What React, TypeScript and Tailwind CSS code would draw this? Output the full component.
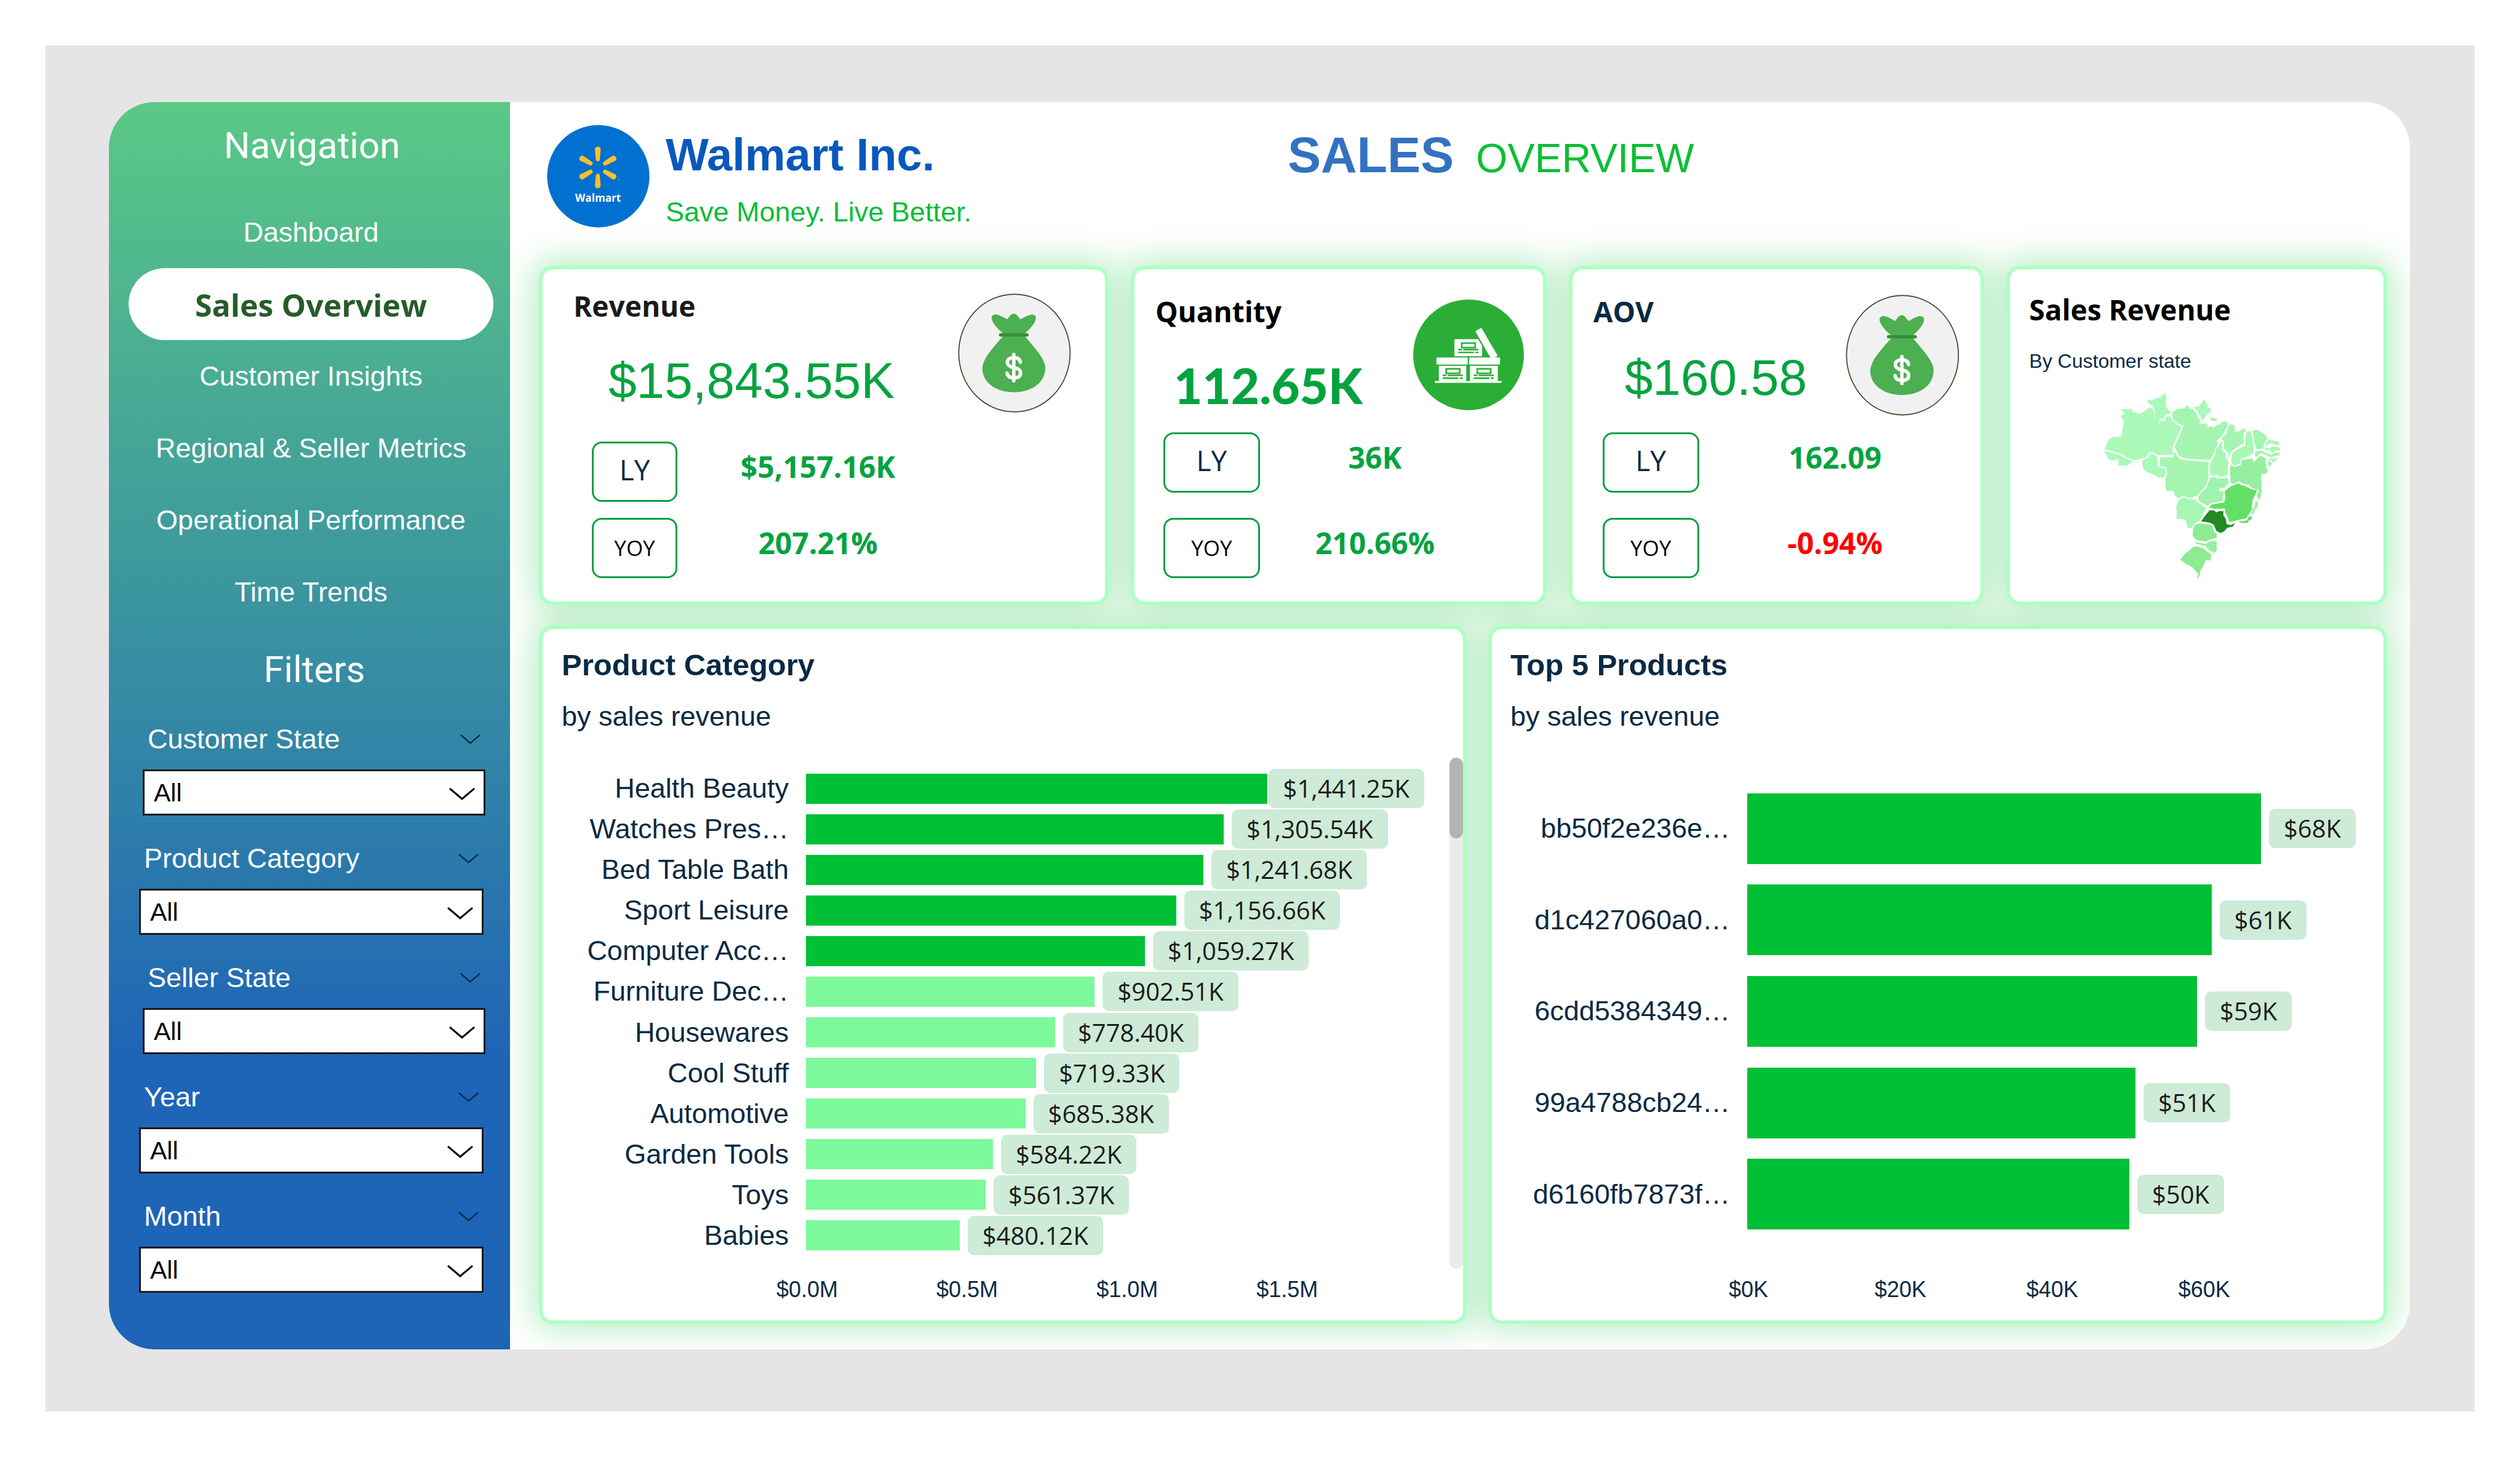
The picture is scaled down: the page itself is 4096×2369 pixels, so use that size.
import type { ReactNode } from "react";

const navItems = [
  "Dashboard",
  "Sales Overview",
  "Customer Insights",
  "Regional & Seller Metrics",
  "Operational Performance",
  "Time Trends",
];

const filters = [
  { id: "customer-state", label: "Customer State", pad: "pl-[55px] pr-10" },
  { id: "product-category", label: "Product Category", pad: "pl-[49px] pr-[43px]" },
  { id: "seller-state", label: "Seller State", pad: "pl-[55px] pr-10" },
  { id: "year", label: "Year", pad: "pl-[49px] pr-[43px]" },
  { id: "month", label: "Month", pad: "pl-[49px] pr-[43px]" },
];

type Bar = { name: string; value: number; text: string; tone: string };

const DARK = "bg-[#00c036]";
const LIGHT = "bg-[#7df99c]";

const categories: Bar[] = [
  { name: "Health Beauty", value: 1441.25, text: "$1,441.25K", tone: DARK },
  { name: "Watches Pres…", value: 1305.54, text: "$1,305.54K", tone: DARK },
  { name: "Bed Table Bath", value: 1241.68, text: "$1,241.68K", tone: DARK },
  { name: "Sport Leisure", value: 1156.66, text: "$1,156.66K", tone: DARK },
  { name: "Computer Acc…", value: 1059.27, text: "$1,059.27K", tone: DARK },
  { name: "Furniture Dec…", value: 902.51, text: "$902.51K", tone: LIGHT },
  { name: "Housewares", value: 778.4, text: "$778.40K", tone: LIGHT },
  { name: "Cool Stuff", value: 719.33, text: "$719.33K", tone: LIGHT },
  { name: "Automotive", value: 685.38, text: "$685.38K", tone: LIGHT },
  { name: "Garden Tools", value: 584.22, text: "$584.22K", tone: LIGHT },
  { name: "Toys", value: 561.37, text: "$561.37K", tone: LIGHT },
  { name: "Babies", value: 480.12, text: "$480.12K", tone: LIGHT },
];

const products: Bar[] = [
  { name: "bb50f2e236e…", value: 67.5, text: "$68K", tone: DARK },
  { name: "d1c427060a0…", value: 61, text: "$61K", tone: DARK },
  { name: "6cdd5384349…", value: 59.1, text: "$59K", tone: DARK },
  { name: "99a4788cb24…", value: 51, text: "$51K", tone: DARK },
  { name: "d6160fb7873f…", value: 50.2, text: "$50K", tone: DARK },
];

const states: { id: string; fill: string; points: string }[] = [
  { id: "RR", fill: "#aaf9b9", points: "373,52 376,62 382,72 378,98 384,126 402,146 400,156 380,156 372,172 366,184 354,176 345,188 342,203 322,190 322,140 318,120 300,106 288,96 290,82 305,90 325,80 350,74" },
  { id: "AM", fill: "#aaf9b9", points: "160,132 204,132 208,126 214,145 235,150 240,155 258,152 285,132 300,122 314,130 320,150 320,185 338,202 348,200 355,184 364,192 372,190 380,168 400,166 410,185 430,205 456,222 412,320 414,358 334,360 318,346 296,346 280,370 240,382 220,386 146,350 74,328 86,310 90,290 105,276 120,270 158,268 166,225 170,192 156,165 176,152 160,138" },
  { id: "AC", fill: "#aaf9b9", points: "70,338 142,356 218,393 200,400 188,412 144,412 144,380 126,382 110,388 90,374 88,362" },
  { id: "RO", fill: "#aaf9b9", points: "264,385 290,372 302,354 316,354 338,372 340,418 374,424 378,450 368,470 340,470 310,452 290,446 268,430 262,410" },
  { id: "PA", fill: "#a5f5b1", points: "410,146 440,130 474,126 480,114 492,116 494,128 512,132 528,150 545,185 552,195 542,206 558,206 580,200 584,214 590,222 600,216 612,218 614,230 622,216 640,208 650,205 656,192 668,196 676,190 684,198 686,212 672,240 652,270 628,290 640,298 622,330 620,350 598,384 470,376 442,360 428,330 422,318 468,214 440,204 414,184" },
  { id: "AP", fill: "#aaf9b9", points: "568,82 576,92 584,110 586,122 604,130 596,150 580,162 560,188 545,160 534,138 514,122 544,118" },
  { id: "MJ", fill: "#a5f5b1", points: "596,174 636,178 622,192 604,190" },
  { id: "MA", fill: "#a5f5b1", points: "692,210 700,206 706,212 718,208 722,236 712,242 740,242 764,228 776,234 764,250 766,300 738,318 710,336 696,352 694,380 686,345 668,330 666,290 654,278 680,250" },
  { id: "PI", fill: "#a8f7b5", points: "784,242 798,240 806,270 814,320 816,345 796,362 752,376 746,400 722,412 704,400 704,375 710,345 740,328 772,312 774,260" },
  { id: "CE", fill: "#a5f5b1", points: "808,238 830,234 860,250 884,275 864,305 860,328 826,330 816,290" },
  { id: "RN", fill: "#a8f7b5", points: "888,284 910,288 936,290 942,312 925,308 900,302 885,304 875,318 872,302" },
  { id: "PB", fill: "#a8f7b5", points: "872,322 890,326 905,318 944,322 944,336 925,336 905,350 895,334 870,336" },
  { id: "PE", fill: "#a5f5b1", points: "826,340 850,336 870,346 900,358 915,350 944,346 940,362 920,364 900,370 880,362 850,350 824,372 818,354" },
  { id: "AL", fill: "#a8f7b5", points: "886,372 905,378 935,372 914,398 900,386" },
  { id: "SE", fill: "#a8f7b5", points: "886,384 908,402 890,420 884,400" },
  { id: "BA", fill: "#95ef9f", points: "700,408 722,418 750,408 756,384 806,376 816,392 846,362 876,378 870,398 878,408 874,418 886,434 874,452 854,454 850,482 852,500 854,540 846,576 836,580 830,556 840,534 806,522 790,508 760,500 740,488 716,502 700,498 696,440" },
  { id: "TO", fill: "#a8f7b5", points: "650,292 660,296 658,335 676,350 674,366 690,392 684,430 686,458 650,468 628,454 620,464 600,458 596,430 600,400 622,360 628,325 640,315" },
  { id: "MT", fill: "#a5f5b1", points: "350,370 414,370 422,340 440,372 462,384 592,394 588,440 592,470 578,510 552,540 530,566 520,562 510,572 486,570 466,560 440,574 422,558 420,538 380,536 376,478 386,450 382,420 350,414" },
  { id: "GO", fill: "#9ff3ac", points: "598,472 622,468 632,476 686,472 690,500 672,520 645,522 642,538 666,540 662,586 600,598 586,610 548,592 538,570 552,548 578,524" },
  { id: "MG", fill: "#63df68", points: "738,500 752,508 770,512 800,528 830,534 820,560 808,584 804,630 778,672 740,680 694,692 686,670 672,640 672,624 620,626 594,620 606,604 668,594 674,570 670,538 700,514" },
  { id: "ES", fill: "#9cf2a7", points: "824,584 836,594 834,616 820,628 818,642 804,655 798,650 808,636 804,630 818,614" },
  { id: "RJ", fill: "#63df68", points: "742,688 780,684 792,662 806,664 804,678 790,684 784,696 746,694" },
  { id: "SP", fill: "#228b22", points: "596,632 618,634 630,644 642,638 664,636 664,660 676,674 680,702 700,706 722,696 710,714 682,720 672,734 652,746 630,736 616,704 596,694 554,688 570,664" },
  { id: "MS", fill: "#a8f7b5", points: "440,584 466,568 490,576 524,580 540,596 580,622 566,646 546,686 520,700 508,720 488,722 478,682 460,676 432,676 434,640 430,620" },
  { id: "PR", fill: "#8bec92", points: "524,704 550,698 608,706 618,740 632,752 632,770 600,776 576,788 530,780 512,760 514,728" },
  { id: "SC", fill: "#94f1a0", points: "524,790 576,800 600,784 630,786 632,830 614,852 616,840 598,834 576,810 526,798" },
  { id: "RS", fill: "#8bec92", points: "450,878 470,852 490,836 516,814 540,814 564,822 580,836 606,852 600,868 602,882 578,878 566,906 548,936 546,960 532,972 540,950 510,914 480,900" },
];

function BrazilMap() {
  return (
    <svg viewBox="0 0 1024 1024" className="size-84 self-center" role="img" aria-label="Sales revenue by Brazilian state">
      {states.map((s) => (
        <polygon key={s.id} points={s.points} fill={s.fill} />
      ))}
    </svg>
  );
}

function WalmartLogo() {
  return (
    <svg viewBox="36 48 507 508" className="mt-[37px] size-[167px] shrink-0" role="img" aria-label="Walmart">
      <circle cx="289.5" cy="302" r="253" fill="#0071d0" />
      {[0, 60, 120, 180, 240, 300].map((a) => (
        <path
          key={a}
          transform={`rotate(${a} 287 259)`}
          fill="#fdc029"
          d="M273 170 Q273 156 287 156 Q301 156 301 170 L297 219 Q296 228 287 228 Q278 228 277 219 Z"
        />
      ))}
      <circle cx="390" cy="318" r="4" fill="none" stroke="#b8a35a" strokeWidth="2" />
      <text x="288" y="429" textAnchor="middle" fontFamily="Open Sans, Noto Sans, sans-serif" fontWeight="700" fontSize="52" fill="#fff">
        Walmart
      </text>
    </svg>
  );
}

function MoneyBag({ className }: { className: string }) {
  return (
    <svg viewBox="54 37 555 588" preserveAspectRatio="none" className={className} aria-hidden="true">
      <ellipse cx="331" cy="331" rx="273" ry="290" fill="#f1f1f1" stroke="#2f4a22" strokeWidth="5" />
      <path
        fill="#4caf50"
        d="M276 234 C250 214 222 184 219 160 C219 144 232 139 246 142 C264 146 280 156 295 165 C302 157 306 151 311 145 C320 134 336 134 344 145 C350 152 354 158 361 165 C376 156 392 146 412 142 C426 140 438 146 436 162 C432 186 404 216 382 234 Z"
      />
      <path
        fill="#4caf50"
        d="M276 248 H382 C412 284 446 322 464 352 C478 376 484 392 482 412 C478 482 410 524 328 524 C246 524 178 482 174 412 C173 392 180 374 192 352 C212 320 246 282 276 248 Z"
      />
      <rect x="255" y="233" width="146" height="17" rx="8" fill="#388e3c" />
      <g fill="none" stroke="#fbfdfb" strokeWidth="17" strokeLinecap="round">
        <path d="M328 338 V468" />
        <path d="M360 376 C358 360 346 354 328 354 C308 354 296 362 296 377 C296 392 308 398 328 403 C350 408 361 414 361 430 C361 446 348 453 328 453 C308 453 297 446 295 430" />
      </g>
    </svg>
  );
}

function BoxFront({ x, y }: { x: number; y: number }) {
  return (
    <g transform={`translate(${x} ${y})`} stroke="#2bae36" strokeWidth="8" strokeLinecap="round" fill="none">
      <rect x="36" y="16" width="66" height="22" strokeLinecap="butt" />
      <path d="M22 48 H34 M46 48 H114 M22 62 H92 M106 62 H114" />
    </g>
  );
}

function BoxesIcon({ className }: { className: string }) {
  return (
    <svg viewBox="45 39 543 546" preserveAspectRatio="none" className={className} aria-hidden="true">
      <ellipse cx="316.5" cy="312" rx="271.5" ry="273" fill="#2bae36" />
      <g fill="#fff">
        <path d="M250 235 H364 L383 268 V319 H247 V238 Z" />
        <path d="M351 198 Q350 195 353 193 L376 181 Q380 179 382 183 L458 314 Q459 318 455 320 L444 325 H426 L421 321 Z" />
        <rect x="159" y="325" width="153" height="35" rx="4" />
        <rect x="319" y="325" width="152" height="35" rx="4" />
        <rect x="171" y="366" width="135" height="80" />
        <rect x="323" y="366" width="137" height="80" />
        <rect x="151" y="441" width="328" height="9" rx="4" />
      </g>
      <rect x="306" y="366" width="17" height="75" fill="#2bae36" />
      <BoxFront x={247} y={238} />
      <BoxFront x={171} y={365} />
      <BoxFront x={323} y={365} />
    </svg>
  );
}

function Chevron({ className }: { className: string }) {
  return (
    <svg viewBox="0 0 42 20" className={className} fill="none" stroke="currentColor" strokeWidth="3" aria-hidden="true">
      <path d="M1 1 L21 18 L41 1" />
    </svg>
  );
}

function Card({ className, children }: { className: string; children: ReactNode }) {
  return (
    <section
      className={`relative flex min-w-0 flex-col rounded-[22px] border-[6px] border-[#aeffc2] bg-white before:absolute before:-inset-1.5 before:-z-10 before:rounded-[22px] before:shadow-[0_0_56px_10px_rgba(0,190,55,0.28)] before:content-[''] ${className}`}
    >
      {children}
    </section>
  );
}

function Metric({ label, value, boxWidth, valueWidth, red }: { label: string; value: string; boxWidth: string; valueWidth: string; red?: boolean }) {
  return (
    <div className="flex items-center">
      <dt
        className={`flex h-[98px] shrink-0 items-center justify-center rounded-2xl border-[3px] border-[#08a045] ${boxWidth} ${
          label === "LY" ? "pb-2 text-[46px] text-[#0a2a43]" : "text-[35px] text-black"
        }`}
      >
        {label}
      </dt>
      <dd className={`pb-4 text-center text-[48px] leading-[60px] font-bold ${valueWidth} ${red ? "text-[#fe0000]" : "text-[#04a33f]"}`}>
        {value}
      </dd>
    </div>
  );
}

function BarChart({ bars, domain, labelWidth, barHeight, className }: { bars: Bar[]; domain: number; labelWidth: string; barHeight: string; className: string }) {
  return (
    <ul className={`flex min-w-0 flex-1 flex-col ${className}`}>
      {bars.map((b) => (
        <li key={b.name} className="flex min-h-0 flex-1 items-center">
          <span className={`shrink-0 text-right text-[45px] leading-[54px] whitespace-nowrap ${labelWidth}`}>{b.name}</span>
          <div className="ml-7 flex min-w-0 flex-1 items-center">
            <div className={`shrink-0 ${barHeight} ${b.tone}`} style={{ width: `${(b.value / domain) * 100}%` }} />
            <div className="w-[13px] shrink" />
            <span className="h-16 shrink-0 rounded-[10px] bg-[#cdebd7] px-6 font-['Open_Sans','Noto_Sans',sans-serif] text-[40px] leading-[64px] text-[#1b1b1b]">
              {b.text}
            </span>
          </div>
        </li>
      ))}
    </ul>
  );
}

function Axis({ ticks, step, domain, className }: { ticks: string[]; step: number; domain: number; className: string }) {
  return (
    <div className={`mt-2.5 flex text-[36px] leading-[48px] ${className}`}>
      {ticks.map((t) => (
        <span key={t} className="flex shrink-0" style={{ width: `${(step / domain) * 100}%` }}>
          <span className="flex w-0 justify-center whitespace-nowrap">{t}</span>
        </span>
      ))}
    </div>
  );
}

function Sidebar() {
  return (
    <aside className="flex w-[652px] shrink-0 flex-col bg-[linear-gradient(180deg,#5ac985_0%,#1e64b7_77%)] pt-[35px] text-white">
      <h2 className="ml-2 text-center font-[Roboto,sans-serif] text-[60px] leading-[72px]">Navigation</h2>
      <nav className="mt-[46px] mr-[27px] ml-8 flex flex-col">
        {navItems.map((item) => (
          <a
            key={item}
            href="#"
            aria-current={item === "Sales Overview" ? "page" : undefined}
            className={`flex h-[117px] items-center justify-center rounded-full whitespace-nowrap ${
              item === "Sales Overview"
                ? "bg-white pt-1 font-['Open_Sans','Noto_Sans',sans-serif] text-[50px] font-bold text-[#265c2a]"
                : "text-[45px]"
            }`}
          >
            {item}
          </a>
        ))}
      </nav>
      <h2 className="mt-8 ml-4 text-center font-[Roboto,sans-serif] text-[60px] leading-[72px]">Filters</h2>
      <form className="mt-[50px] flex flex-col gap-[43px]">
        {filters.map((f) => (
          <div key={f.id} className={`flex flex-col gap-[22px] ${f.pad}`}>
            <div className="flex items-center justify-between px-2 leading-[54px]">
              <label htmlFor={f.id} className="text-[45px]">
                {f.label}
              </label>
              <button type="button" aria-label={`Collapse ${f.label}`} className="text-[#0b2a45]">
                <Chevron className="h-4 w-[33px]" />
              </button>
            </div>
            <div className="relative">
              <select
                id={f.id}
                className="h-[75px] w-full appearance-none rounded-none border-[3px] border-[#1a1a1a] bg-white pl-[15px] text-[41px] leading-[60px] text-black"
              >
                <option>All</option>
              </select>
              <Chevron className="pointer-events-none absolute top-[30px] right-[17px] h-5 w-[42px] text-black" />
            </div>
          </div>
        ))}
      </form>
    </aside>
  );
}

const kpiTitle = "text-[46px] leading-[60px] font-bold whitespace-nowrap";
const kpiValue = "font-['Liberation_Sans',Arial,sans-serif] text-[82px] leading-[96px] text-[#04a33f]";

export default function App() {
  return (
    <div className="flex min-h-screen bg-white p-[74px] font-['Liberation_Sans',Arial,sans-serif] text-[#0a2a43]">
      <div className="flex min-w-0 flex-1 bg-[#e5e5e5] pt-[92px] pr-[105px] pb-[101px] pl-[103px]">
        <div className="isolate flex min-w-0 flex-1 overflow-hidden rounded-[74px] bg-white">
          <Sidebar />
          <main className="grid min-w-0 flex-1 grid-rows-[auto_minmax(0,552fr)_minmax(0,1169fr)] pr-[37px] pb-[41px] pl-[47px]">
            <header className="grid h-[266px] grid-cols-[minmax(0,1217fr)_minmax(0,1787fr)] items-start">
              <div className="flex gap-[26px] pl-[13px]">
                <WalmartLogo />
                <div className="flex flex-col pt-11">
                  <p className="text-[74px] leading-[84px] font-bold text-[#0a58bd]">Walmart Inc.</p>
                  <p className="mt-6 text-[45px] leading-[54px] text-[#0abc3a]">Save Money. Live Better.</p>
                </div>
              </div>
              <h1 className="flex items-baseline gap-9 pt-[38px] leading-[96px]">
                <span className="text-[81px] font-bold text-[#3372c0]">SALES</span>
                <span className="text-[66px] text-[#0bbf33]">OVERVIEW</span>
              </h1>
            </header>

            <div className="grid grid-cols-[minmax(0,925fr)_minmax(0,675fr)_minmax(0,675fr)_minmax(0,618fr)] gap-9 font-['Open_Sans','Noto_Sans',sans-serif]">
              <Card className="justify-between pt-[29px] pb-[38px]">
                <div className="flex items-start justify-between pr-[55px] pl-[50px]">
                  <div>
                    <h2 className={`${kpiTitle} text-[#1b1b1b]`}>Revenue</h2>
                    <p className={`mt-11 ml-[57px] ${kpiValue}`}>$15,843.55K</p>
                  </div>
                  <MoneyBag className="mt-[10px] h-[194px] w-[184px] shrink-0" />
                </div>
                <dl className="flex flex-col gap-[26px] pl-20">
                  <Metric label="LY" value="$5,157.16K" boxWidth="w-[139px]" valueWidth="w-[457px]" />
                  <Metric label="YOY" value="207.21%" boxWidth="w-[139px]" valueWidth="w-[457px]" />
                </dl>
              </Card>

              <Card className="justify-between pt-[29px] pb-[38px]">
                <div className="flex items-start justify-between pr-[31px] pl-[34px]">
                  <div className="mt-[9px]">
                    <h2 className={`${kpiTitle} text-black`}>Quantity</h2>
                    <p className="mt-[42px] ml-[30px] font-[Lato,sans-serif] text-[80px] leading-[96px] font-black text-[#04a33f]">112.65K</p>
                  </div>
                  <BoxesIcon className="mt-5 size-[180px] shrink-0" />
                </div>
                <dl className="flex flex-col gap-[41px] pl-[47px]">
                  <Metric label="LY" value="36K" boxWidth="w-[157px]" valueWidth="w-[374px]" />
                  <Metric label="YOY" value="210.66%" boxWidth="w-[157px]" valueWidth="w-[374px]" />
                </dl>
              </Card>

              <Card className="justify-between pt-[29px] pb-[38px]">
                <div className="flex items-start justify-between pr-[34px] pl-[34px]">
                  <div className="mt-[9px]">
                    <h2 className={`${kpiTitle} text-[#0a2a43]`}>AOV</h2>
                    <p className={`mt-[30px] ml-[51px] ${kpiValue}`}>$160.58</p>
                  </div>
                  <MoneyBag className="mt-3 h-[197px] w-[185px] shrink-0" />
                </div>
                <dl className="flex flex-col gap-[41px] pl-[49px]">
                  <Metric label="LY" value="162.09" boxWidth="w-[157px]" valueWidth="w-[442px]" />
                  <Metric label="YOY" value="-0.94%" boxWidth="w-[157px]" valueWidth="w-[442px]" red />
                </dl>
              </Card>

              <Card className="pt-[35px] pr-11 pl-[31px]">
                <h2 className={`${kpiTitle} text-black`}>Sales Revenue</h2>
                <p className="mt-[34px] mb-[15px] font-['Liberation_Sans',Arial,sans-serif] text-[32px] leading-10">By Customer state</p>
                <BrazilMap />
              </Card>
            </div>

            <div className="mt-[33px] grid grid-cols-[minmax(0,1508fr)_minmax(0,1461fr)] gap-[35px]">
              <Card className="pt-[30px] pb-[26px] pl-[31px]">
                <h2 className="text-[49px] leading-[56px] font-bold">Product Category</h2>
                <p className="mt-[29px] text-[45px] leading-[54px]">by sales revenue</p>
                <div className="mt-10 flex min-h-0 flex-1">
                  <BarChart bars={categories} domain={1932} labelWidth="w-[369px]" barHeight="h-[49px]" className="pt-[17px] pb-[21px]" />
                  <div className="ml-[41px] w-[22px] shrink-0 rounded-full bg-[#ebebeb]">
                    <div className="h-[131px] rounded-full bg-[#b3b3b3]" />
                  </div>
                </div>
                <Axis ticks={["$0.0M", "$0.5M", "$1.0M", "$1.5M"]} step={500} domain={1932} className="mr-[61px] ml-[399px]" />
              </Card>

              <Card className="pt-[30px] pr-8 pb-[26px] pl-[30px]">
                <h2 className="text-[49px] leading-[56px] font-bold">Top 5 Products</h2>
                <p className="mt-[29px] text-[45px] leading-[54px]">by sales revenue</p>
                <div className="mt-10 flex min-h-0 flex-1">
                  <BarChart bars={products} domain={81} labelWidth="w-[357px]" barHeight="h-[115px]" className="pt-[41px] pb-[47px]" />
                </div>
                <Axis ticks={["$0K", "$20K", "$40K", "$60K"]} step={20} domain={81} className="ml-[387px]" />
              </Card>
            </div>
          </main>
        </div>
      </div>
    </div>
  );
}
